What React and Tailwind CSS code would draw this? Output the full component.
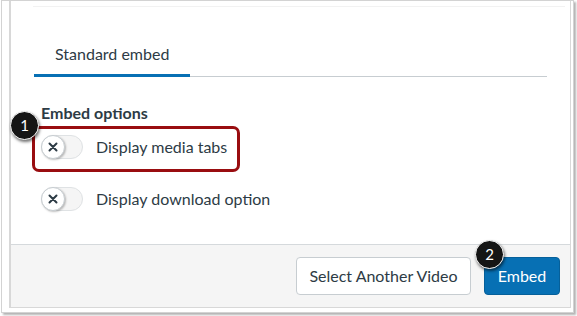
import React from 'react'

const ink = 'text-[#2d3b45]'

function Toggle() {
  return (
    <span className="relative inline-flex h-[24px] w-[42px] shrink-0 items-center rounded-full border border-[#dfe2e4] bg-[#f5f5f5]">
      <span className="absolute -left-px flex h-[24px] w-[24px] items-center justify-center rounded-full border border-[#c7cdd1] bg-white shadow-[1px_1px_2px_rgba(0,0,0,0.25)]">
        <svg width="10" height="10" viewBox="0 0 10 10">
          <path d="M1.5 1.5 L8.5 8.5 M8.5 1.5 L1.5 8.5" stroke="#2d3b45" strokeWidth="2" strokeLinecap="round" />
        </svg>
      </span>
    </span>
  )
}

function Badge({ n, className }) {
  return (
    <span className={`absolute flex h-[29px] w-[29px] items-center justify-center rounded-full border border-white bg-[#151515] text-[15px] text-white shadow-[1px_2px_3px_rgba(0,0,0,0.55)] ${className}`}>
      {n}
    </span>
  )
}

export default function App() {
  return (
    <div className={`relative h-[316px] w-[577px] overflow-hidden bg-white font-['Lato',sans-serif] ${ink}`}>
      {/* outer frame */}
      <div className="ml-px h-[313px] w-[573px] border border-[#d3d3d3] pl-[7px] shadow-[2px_2px_2px_rgba(0,0,0,0.3)]">
        {/* modal */}
        <div className="flex h-[307px] w-[562px] flex-col border-b border-l-2 border-r border-[#d8d8d8]">
          <div className="flex-1 pl-[23px] pt-[5px]">
            <div className="-ml-px h-px w-[532px] bg-[#f2f2f2]" />

            {/* tabs */}
            <div className="mt-[23px] flex w-[513px] border-b border-[#c7cdd1]">
              <div className="-mb-px border-b-[3px] border-[#0770b4] px-[21px] pb-2 pt-3 text-[16px] leading-[24px]">
                Standard embed
              </div>
            </div>

            <div className="mt-[24px] pl-[7px] text-[16px] font-bold leading-[24px]">Embed options</div>

            <div className="mt-[10px] flex items-center gap-[13px] pl-[7px] text-[16px] leading-[24px]">
              <Toggle />
              <span>Display media tabs</span>
            </div>
            <div className="mt-[28px] flex items-center gap-[13px] pl-[7px] text-[16px] leading-[24px]">
              <Toggle />
              <span>Display download option</span>
            </div>
          </div>

          {/* footer */}
          <div className="flex h-[63px] items-center justify-end gap-[13px] border-t border-[#d5d9dc] bg-[#f5f5f5] pr-[10px]">
            <button className="h-[38px] w-[175px] rounded-[4px] border border-[#c7cdd1] bg-white text-[16px]">
              Select Another Video
            </button>
            <button className="h-[38px] w-[76px] rounded-[4px] border border-[#06609a] bg-[#0770b4] text-[16px] text-white">
              Embed
            </button>
          </div>
        </div>
      </div>

      {/* callouts */}
      <div className="absolute left-[32px] top-[126px] h-[46px] w-[208px] rounded-[7px] border-[3px] border-[#990d10]" />
      <Badge n="1" className="left-[10px] top-[111px]" />
      <Badge n="2" className="left-[475px] top-[240px]" />
    </div>
  )
}
